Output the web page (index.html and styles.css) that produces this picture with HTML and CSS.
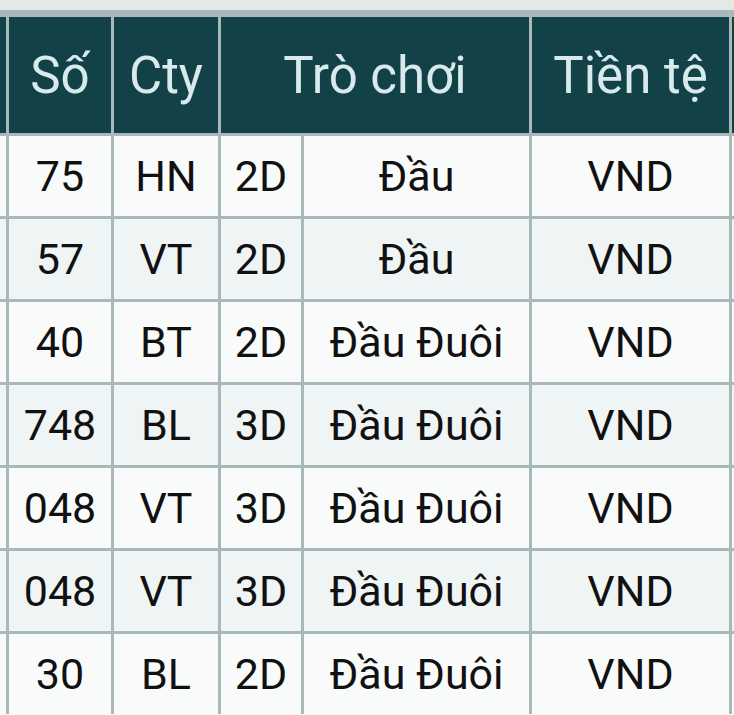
FILE: index.html
```html
<!DOCTYPE html>
<html lang="vi">
<head>
<meta charset="utf-8">
<title>Bảng cược</title>
<link rel="stylesheet" href="styles.css">
</head>
<body>
<div class="topband"></div>
<div class="sheet">
  <div class="grid">
    <div class="cell head"></div>
    <div class="cell head">Số</div>
    <div class="cell head">Cty</div>
    <div class="cell head span2">Trò chơi</div>
    <div class="cell head">Tiền tệ</div>
    <div class="cell head"></div>

    <div class="cell odd"></div><div class="cell odd">75</div><div class="cell odd">HN</div><div class="cell odd">2D</div><div class="cell odd">Đầu</div><div class="cell odd">VND</div><div class="cell odd"></div>
    <div class="cell even"></div><div class="cell even">57</div><div class="cell even">VT</div><div class="cell even">2D</div><div class="cell even">Đầu</div><div class="cell even">VND</div><div class="cell even"></div>
    <div class="cell odd"></div><div class="cell odd">40</div><div class="cell odd">BT</div><div class="cell odd">2D</div><div class="cell odd">Đầu Đuôi</div><div class="cell odd">VND</div><div class="cell odd"></div>
    <div class="cell even"></div><div class="cell even">748</div><div class="cell even">BL</div><div class="cell even">3D</div><div class="cell even">Đầu Đuôi</div><div class="cell even">VND</div><div class="cell even"></div>
    <div class="cell odd"></div><div class="cell odd">048</div><div class="cell odd">VT</div><div class="cell odd">3D</div><div class="cell odd">Đầu Đuôi</div><div class="cell odd">VND</div><div class="cell odd"></div>
    <div class="cell even"></div><div class="cell even">048</div><div class="cell even">VT</div><div class="cell even">3D</div><div class="cell even">Đầu Đuôi</div><div class="cell even">VND</div><div class="cell even"></div>
    <div class="cell odd"></div><div class="cell odd">30</div><div class="cell odd">BL</div><div class="cell odd">2D</div><div class="cell odd">Đầu Đuôi</div><div class="cell odd">VND</div><div class="cell odd"></div>
  </div>
</div>
</body>
</html>
```

FILE: styles.css
```css
html, body {
  margin: 0;
  padding: 0;
  width: 734px;
  height: 715px;
  overflow: hidden;
  background: #f9fbfb;
  font-family: Roboto, "Noto Sans", sans-serif;
}

.topband {
  height: 10px;
  background: #e6e8e8;
}

.sheet {
  background: #a9b8ba;
  padding-top: 7px;
}

.grid {
  display: grid;
  grid-template-columns: 6px 102px 104px 80px 225px 197px 2px;
  grid-template-rows: 116px;
  grid-auto-rows: 80px;
  gap: 3px;
  background: #a9b8ba;
}

.cell {
  display: flex;
  align-items: center;
  justify-content: center;
  white-space: nowrap;
  overflow: hidden;
  font-size: 43px;
  color: #111;
}

.head {
  background: #124148;
  color: #d8eaec;
  font-size: 51px;
}

.span2 {
  grid-column: span 2;
}

.odd {
  background: #f9fbfb;
}

.even {
  background: #eff4f5;
}
```
